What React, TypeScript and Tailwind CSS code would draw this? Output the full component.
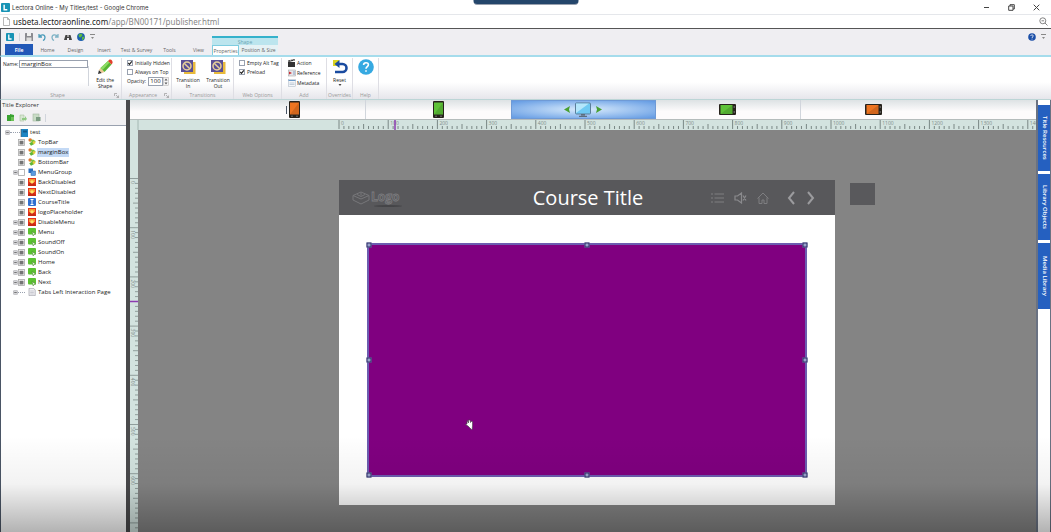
import { type ReactNode } from 'react';

type NodeKind = 'shape' | 'group' | 'image' | 'text' | 'button' | 'page';

interface TreeNode {
  name: string;
  kind: NodeKind;
  expandable?: boolean;
  checkbox?: 'filled' | 'empty';
  selected?: boolean;
}

const nodes: TreeNode[] = [
  { name: 'TopBar', kind: 'shape', checkbox: 'filled' },
  { name: 'marginBox', kind: 'shape', checkbox: 'filled', selected: true },
  { name: 'BottomBar', kind: 'shape', checkbox: 'filled' },
  { name: 'MenuGroup', kind: 'group', checkbox: 'empty', expandable: true },
  { name: 'BackDisabled', kind: 'image', checkbox: 'filled' },
  { name: 'NextDisabled', kind: 'image', checkbox: 'filled' },
  { name: 'CourseTitle', kind: 'text', checkbox: 'filled' },
  { name: 'logoPlaceholder', kind: 'image', checkbox: 'filled' },
  { name: 'DisableMenu', kind: 'image', checkbox: 'filled', expandable: true },
  { name: 'Menu', kind: 'button', checkbox: 'filled', expandable: true },
  { name: 'SoundOff', kind: 'button', checkbox: 'filled', expandable: true },
  { name: 'SoundOn', kind: 'button', checkbox: 'filled', expandable: true },
  { name: 'Home', kind: 'button', checkbox: 'filled', expandable: true },
  { name: 'Back', kind: 'button', checkbox: 'filled', expandable: true },
  { name: 'Next', kind: 'button', checkbox: 'filled', expandable: true },
  { name: 'Tabs Left Interaction Page', kind: 'page', expandable: true },
];

const LogoMark = ({ className }: { className: string }) => (
  <svg viewBox="0 0 10 10" className={className}>
    <rect width="10" height="10" rx="1" fill="#1793b5" />
    <path d="M3.5 2v5.5H7" fill="none" stroke="#fff" strokeWidth="1.6" />
  </svg>
);

const NodeIcon = ({ kind }: { kind: NodeKind }) => (
  <svg viewBox="0 0 8 8" className="size-2 shrink-0">
    {kind === 'shape' && (
      <>
        <circle cx="2.2" cy="2" r="1.8" fill="#e2762a" />
        <path d="M2 2.6 5 1.4l2.8 1.8L5.5 5z" fill="#7cc242" />
        <path d="M1.2 5.2 4.5 3.6 6.4 6 3 7.8z" fill="#62b534" />
        <circle cx="6" cy="4.6" r="1.4" fill="#e9cf3b" />
      </>
    )}
    {kind === 'group' && (
      <>
        <rect x="0.5" y="0.5" width="4.5" height="4.5" fill="#2a6fc4" />
        <rect x="3" y="3" width="4.5" height="4.5" fill="#5b9be0" stroke="#2a5f9e" strokeWidth=".5" />
      </>
    )}
    {kind === 'image' && (
      <>
        <rect width="8" height="8" fill="#e2341d" />
        <rect x="1" y="1" width="6" height="3" fill="#f59a2d" />
        <circle cx="4" cy="4" r="1.8" fill="#ffe76b" />
        <path d="M0 6.5 2.5 5 4 6l1.5-1L8 7v1H0z" fill="#c92a14" />
      </>
    )}
    {kind === 'text' && (
      <>
        <rect width="8" height="8" rx="1" fill="#2f6fd0" />
        <path d="M2.5 1.5h3M4 1.5v5M2.5 6.5h3" stroke="#fff" />
      </>
    )}
    {kind === 'button' && (
      <>
        <rect width="8" height="6.5" rx="1" fill="#5cc132" />
        <path d="M4 3.5 7.8 6 6 6.3 5.2 8z" fill="#e8f5e0" stroke="#3e7d26" strokeWidth=".5" />
      </>
    )}
    {kind === 'page' && (
      <>
        <path d="M1 .3h4.5L7.2 2v5.7H1z" fill="#f1f1f4" stroke="#8e8e98" strokeWidth=".6" />
        <path d="M2.2 3h3.6M2.2 4.5h3.6M2.2 6h3.6" stroke="#a3a3ae" strokeWidth=".5" />
      </>
    )}
  </svg>
);

const Expander = () => (
  <svg viewBox="0 0 6 6" className="size-[5px] shrink-0">
    <rect x=".5" y=".5" width="5" height="5" rx="1" fill="#d5d5d8" stroke="#9a9aa0" strokeWidth=".6" />
    <path d="M1.5 3h3" stroke="#444" strokeWidth=".8" />
  </svg>
);

const TreeRow = ({ node }: { node: TreeNode }) => (
  <li className="flex h-[10px] items-center pl-[11px]">
    <span className="flex w-1.5 justify-center">{node.expandable && <Expander />}</span>
    {node.checkbox ? (
      <svg viewBox="0 0 7 7" className="size-[7px] shrink-0">
        <rect x=".5" y=".5" width="6" height="6" fill="#fff" stroke="#a8a8a8" strokeWidth=".8" />
        {node.checkbox === 'filled' && <rect x="1.5" y="1.7" width="4" height="3.8" fill="#757575" />}
      </svg>
    ) : (
      <span className="w-[7px] border-t border-dotted border-gray-400" />
    )}
    <span className="ml-[3px] flex">
      <NodeIcon kind={node.kind} />
    </span>
    <button
      className={
        node.selected
          ? 'ml-px bg-[#c3d9f5] px-px whitespace-nowrap'
          : 'ml-px px-px whitespace-nowrap'
      }
    >
      {node.name}
    </button>
  </li>
);

const TitleExplorer = () => (
  <aside className="flex w-[126px] shrink-0 flex-col border-l border-gray-600 bg-white">
    <h2 className="h-[10px] bg-[#f4f3f5] pl-px text-[6px] leading-[10px] text-[#333]">Title Explorer</h2>
    <div className="flex h-4 items-center gap-1 border-b border-gray-400 bg-[#f1f0f2] pl-[5px]">
      <button aria-label="Add page">
        <svg viewBox="0 0 9 9" className="size-[9px]">
          <path d="M1 2h3v6H1zM4 1l4 1v6H4z" fill="#3aa332" />
          <path d="M5 4h3v4H5z" fill="#6cc257" />
        </svg>
      </button>
      <button aria-label="Import page">
        <svg viewBox="0 0 9 9" className="size-[9px]">
          <path d="M1 2h4v6H1z" fill="#d7e6d2" stroke="#a7c39f" strokeWidth=".6" />
          <path d="M3 5h3V3l2 3-2 2V7H3z" fill="#8fc982" />
        </svg>
      </button>
      <button aria-label="Save to library">
        <svg viewBox="0 0 9 9" className="size-[9px]">
          <rect x="1" y="1" width="6" height="7" fill="#c9dcc6" stroke="#a2b89f" strokeWidth=".6" />
          <rect x="4" y="4" width="4.5" height="4" fill="#7b9c82" />
        </svg>
      </button>
      <span className="h-2 border-l border-gray-300" />
    </div>
    <div className="grow pt-px text-[6px] leading-[9px] text-[#222]">
      <div className="flex h-[10px] items-center pt-px pl-1">
        <Expander />
        <span className="w-2.5 border-t border-dotted border-gray-400" />
        <svg viewBox="0 0 8 8" className="size-2">
          <rect x="1" width="7" height="8" fill="#1f86c4" />
          <path d="M0 1h2M0 3h2M0 5h2M0 7h2" stroke="#555" strokeWidth=".6" />
          <rect x="3" y="1.5" width="4" height="2" fill="#155d8d" />
        </svg>
        <span className="ml-0.5">test</span>
      </div>
      <ul>
        {nodes.map((node) => (
          <TreeRow key={node.name} node={node} />
        ))}
      </ul>
    </div>
  </aside>
);

const BrowserBar = () => (
  <header className="border-b border-[#555] bg-white font-['Noto_Sans',sans-serif]">
    <div className="flex h-[14px] items-center pl-px">
      <LogoMark className="mr-0.5 size-[9px]" />
      <h1 className="grow font-['Inter','Noto_Sans',sans-serif] text-[6px] text-[#333]">
        Lectora Online - My Titles/test - Google Chrome
      </h1>
      <div className="flex items-center gap-[18px] pr-[11px] text-[#444]">
        <button aria-label="Minimize">
          <svg viewBox="0 0 7 7" className="size-[7px]">
            <path d="M1 3.5h5" stroke="currentColor" />
          </svg>
        </button>
        <button aria-label="Restore">
          <svg viewBox="0 0 7 7" className="size-[7px]">
            <path d="M.7 2h4.3v4.3H.7zM2 2V.7h4.3V5H5" fill="none" stroke="currentColor" />
          </svg>
        </button>
        <button aria-label="Close">
          <svg viewBox="0 0 7 7" className="size-[7px]">
            <path d="m.7.7 5.6 5.6m0-5.6L.7 6.3" stroke="currentColor" />
          </svg>
        </button>
      </div>
    </div>
    <div className="flex h-[14px] items-center border-t border-gray-200 pr-[3px] pl-[3px]">
      <svg viewBox="0 0 7 9" className="mr-[3px] h-[9px] w-[7px]">
        <path d="M.5.5h4l2 2v6h-6z" fill="#fff" stroke="#999" strokeWidth=".7" />
        <path d="M4.5.5v2h2" fill="none" stroke="#999" strokeWidth=".7" />
      </svg>
      <span className="grow pb-px text-[8px] leading-[11px] text-[#888]">
        <span className="text-[#222]">usbeta.lectoraonline.com</span>/app/BN00171/publisher.html
      </span>
      <svg viewBox="0 0 9 9" className="size-[9px]" fill="none" stroke="#666" strokeWidth=".8">
        <circle cx="3.8" cy="3.8" r="3" />
        <path d="m6 6 2.5 2.5M2.500 3.800h2.600" />
      </svg>
    </div>
  </header>
);

const QuickAccess = () => (
  <div className="flex h-[15px] items-center border-l border-gray-600 bg-[#efeef2] pl-[5px]">
    <LogoMark className="size-2" />
    <span className="ml-[5px] h-2 border-l border-gray-300" />
    <div className="ml-[5px] flex grow items-center gap-[5px]">
      <button aria-label="Save">
        <svg viewBox="0 0 8 8" className="size-2">
          <rect width="8" height="8" rx=".5" fill="#8a8a90" />
          <rect x="2" width="4" height="3" fill="#eee" />
          <rect x="1.5" y="4.5" width="5" height="3.5" fill="#ddd" />
        </svg>
      </button>
      <button aria-label="Undo">
        <svg viewBox="0 0 8 8" className="size-2" fill="none" stroke="#4c9cba" strokeWidth="1.3">
          <path d="M1 1v3h3M1.300 4C3 .8 7 1.5 7 4.5 7 6 6 7 5 7.500" />
        </svg>
      </button>
      <button aria-label="Redo">
        <svg viewBox="0 0 8 8" className="size-2" fill="none" stroke="#7fb3c6" strokeWidth="1.3">
          <path d="M7 1v3H4M6.700 4C5 .8 1 1.5 1 4.5 1 6 2 7 3 7.500" />
        </svg>
      </button>
      <button aria-label="Find">
        <svg viewBox="0 0 8 8" className="size-2" fill="#444">
          <path d="M1.5 2h2v2h1V2h2L8 7H5V5H3v2H0z" />
        </svg>
      </button>
      <button aria-label="Preview in browser">
        <svg viewBox="0 0 8 8" className="size-2">
          <circle cx="4" cy="4" r="3.9" fill="#1d5fae" />
          <path d="M1.5 1.5 4.500.5 5.500 2.500 3.500 4.500 2 4zM5 4l2.500-.5L6.500 6.500 5 7z" fill="#5dbb3e" />
        </svg>
      </button>
      <button aria-label="Customize toolbar">
        <svg viewBox="0 0 5 6" className="h-1.5 w-[5px]" fill="#888">
          <path d="M0 0h5v1H0zM1 3h3L2.500 5z" />
        </svg>
      </button>
    </div>
    <button aria-label="Help" className="mr-[5px]">
      <svg viewBox="0 0 8 8" className="size-2">
        <circle cx="4" cy="4" r="3.8" fill="#1c4fa8" />
        <path d="M2.800 3c0-1.600 2.500-1.500 2.400 0C5.200 4 4 3.900 4 5M4 5.700v.8" stroke="#fff" strokeWidth=".8" fill="none" />
      </svg>
    </button>
    <button aria-label="Collapse ribbon" className="mr-[5px]">
      <svg viewBox="0 0 5 6" className="h-1.5 w-[5px]" fill="#888">
        <path d="M0 0h5v1H0zM1 3h3L2.500 5z" />
      </svg>
    </button>
  </div>
);

const tabStyle = 'h-[11px] text-center';

const TabStrip = () => (
  <nav className="flex h-[13px] items-end border-b-2 border-l border-b-[#a5dcec] border-l-gray-600 bg-[#efeef2] text-[5px] leading-[10px] text-[#666]">
    <button className="ml-1 h-[11px] w-7 bg-[#2158b8] font-bold text-white">File</button>
    <button className={`${tabStyle} w-[29px]`}>Home</button>
    <button className={`${tabStyle} w-[27px]`}>Design</button>
    <button className={`${tabStyle} w-[30px]`}>Insert</button>
    <button className={`${tabStyle} w-[35px] whitespace-nowrap`}>Test &amp; Survey</button>
    <button className={`${tabStyle} w-[31px]`}>Tools</button>
    <button className={`${tabStyle} w-[27px]`}>View</button>
    <div className="flex flex-col border-t-2 border-[#35b1cb] bg-[#bce5ee]">
      <span className="h-[7px] text-center leading-[8px] text-[#6aa4b2]">Shape</span>
      <div className="flex">
        <button className="h-[10px] w-[27px] border border-b-0 border-[#7fcde0] bg-white leading-[8px]">
          Properties
        </button>
        <button className="h-[10px] w-[39px] bg-[#e6f2f5] leading-[9px] whitespace-nowrap">
          Position &amp; Size
        </button>
      </div>
    </div>
  </nav>
);

interface RibbonGroupProps {
  title: string;
  className: string;
  launcher?: boolean;
  children: ReactNode;
}

const RibbonGroup = ({ title, className, launcher, children }: RibbonGroupProps) => (
  <section className={`flex shrink-0 flex-col border-r border-[#dedee4] ${className}`}>
    <div className="flex grow">{children}</div>
    <div className="flex h-2 items-center text-[5px] leading-[8px] text-[#999]">
      <h3 className="grow text-center">{title}</h3>
      {launcher && (
        <svg viewBox="0 0 5 5" className="mr-0.5 size-[5px]" fill="none" stroke="#999" strokeWidth=".7">
          <path d="M.5 3V.5H3M2 2l2.500 2.500M4.500 2.500v2h-2" />
        </svg>
      )}
    </div>
  </section>
);

const TransitionIcon = () => (
  <svg viewBox="0 0 16 16" className="size-4">
    <rect x="4" y="3" width="11.5" height="12" fill="#e8ba3c" />
    <rect x="1" y="1" width="12" height="12" fill="#5a4f96" />
    <circle cx="7" cy="7" r="4" fill="none" stroke="#e7cf9a" strokeWidth="1.5" />
    <path d="m4.200 4.200 5.600 5.600" stroke="#e7cf9a" strokeWidth="1.5" />
  </svg>
);

const CheckField = ({ label, checked }: { label: string; checked?: boolean }) => (
  <label className="flex h-[9px] items-center gap-0.5 whitespace-nowrap">
    <input
      type="checkbox"
      defaultChecked={checked}
      className="peer size-1.5 appearance-none border border-gray-400 bg-white"
    />
    <svg
      viewBox="0 0 6 6"
      className="-ml-2 hidden size-1.5 peer-checked:block"
      fill="none"
      stroke="#222"
      strokeWidth="1.2"
    >
      <path d="m1.300 3 1.200 1.400L4.800 1.300" />
    </svg>
    {label}
  </label>
);

const Ribbon = () => (
  <div className="flex h-[43px] border-b border-l border-b-[#bcd5d6] border-l-gray-600 bg-linear-to-b from-white from-60% to-[#e6e6eb] pt-px text-[5px] leading-[6px] text-[#222]">
    <RibbonGroup title="Shape" className="w-[121px]" launcher>
      <label className="flex h-[11px] grow items-center gap-px pl-0.5">
        Name:
        <input
          defaultValue="marginBox"
          className="h-2 w-[69px] border border-gray-400 bg-white pl-px text-[6px] leading-[6px] outline-none"
        />
      </label>
      <span className="mt-2 h-[20px] border-l border-gray-300" />
      <button className="flex w-[32px] flex-col items-center pt-px">
        <svg viewBox="0 0 16 16" className="mb-0.5 size-4">
          <path d="M1 15 2 11 5 14z" fill="#333" />
          <path d="m2 11 1.500-2 4 4L5 14z" fill="#eec992" />
          <path d="M3.500 9 11 2l3.500 3.500-7 7.500z" fill="#57b534" />
          <path d="M3.500 9 11 2l1.500 1.500L5.500 11z" fill="#8edb65" />
          <path d="m11 2 1.500-1.500q1.500-.5 2.500 1t.5 2.500L14.500 5.500z" fill="#e2412e" />
        </svg>
        <span>Edit the</span>
        <span>Shape</span>
      </button>
    </RibbonGroup>
    <RibbonGroup title="Appearance" className="w-[50px]" launcher>
      <div className="flex flex-col pl-[5px]">
        <CheckField label="Initially Hidden" checked />
        <CheckField label="Always on Top" />
        <label className="flex h-[10px] items-center whitespace-nowrap">
          Opacity:
          <input
            defaultValue="100"
            className="ml-0.5 h-[9px] w-[15px] border border-gray-400 bg-white text-center text-[6px] outline-none"
          />
          <svg viewBox="0 0 6 9" className="h-[9px] w-1.5">
            <rect x=".3" y=".3" width="5.4" height="8.4" fill="#f4f4f6" stroke="#aaa" strokeWidth=".5" />
            <path d="m1.500 3.500 1.500-2 1.500 2zM1.500 5.500l1.500 2 1.500-2z" fill="#555" />
          </svg>
        </label>
      </div>
    </RibbonGroup>
    <RibbonGroup title="Transitions" className="w-[62px]">
      <button className="flex w-[32px] flex-col items-center pt-px">
        <TransitionIcon />
        <span className="mt-0.5">Transition</span>
        <span>In</span>
      </button>
      <button className="flex w-[28px] flex-col items-center pt-px">
        <TransitionIcon />
        <span className="mt-0.5">Transition</span>
        <span>Out</span>
      </button>
    </RibbonGroup>
    <RibbonGroup title="Web Options" className="w-[48px]">
      <div className="flex flex-col pl-[5px]">
        <CheckField label="Empty Alt Tag" />
        <CheckField label="Preload" checked />
      </div>
    </RibbonGroup>
    <RibbonGroup title="Add" className="w-[45px]">
      <div className="flex flex-col pl-[6px]">
        <button className="flex h-[10px] items-center gap-px">
          <svg viewBox="0 0 8 8" className="size-2">
            <path d="M0 3h7v5H0zM0 1.500 6.500 0 7 1.500.5 3z" fill="#333" />
            <path d="m2 .8 1.500 1.400M4.500.3 6 1.800" stroke="#ddd" strokeWidth=".7" />
          </svg>
          Action
        </button>
        <button className="flex h-[10px] items-center gap-px">
          <svg viewBox="0 0 8 8" className="size-2">
            <rect x=".5" y="1" width="7" height="6" fill="#e6e6ea" stroke="#999" strokeWidth=".5" />
            <path d="M1 2.500 4 4 1 5.500z" fill="#ca3338" />
            <path d="M5 3h2M5 5h2" stroke="#4774ad" strokeWidth=".6" />
          </svg>
          Reference
        </button>
        <button className="flex h-[10px] items-center gap-px">
          <svg viewBox="0 0 8 8" className="size-2">
            <rect x=".5" y=".5" width="7" height="7" fill="#f5f7fa" stroke="#a3b1c2" strokeWidth=".5" />
            <path d="M.5 1.500h7" stroke="#6c9bc9" />
            <path d="M1.500 4h5M1.500 5.500h5" stroke="#a3b1c2" strokeWidth=".6" />
          </svg>
          Metadata
        </button>
      </div>
    </RibbonGroup>
    <RibbonGroup title="Overrides" className="w-[26px]">
      <button className="flex grow flex-col items-center pt-px">
        <svg viewBox="0 0 16 16" className="size-4">
          <path d="M1 1h6v6H1z" fill="#d9d322" />
          <path d="M6 5h4.500a4 4 0 0 1 0 8H3" fill="none" stroke="#1a4ba0" strokeWidth="2.6" />
          <path d="M7.500 1v8L2.500 5z" fill="#1a4ba0" />
        </svg>
        <span className="mt-0.5">Reset</span>
        <svg viewBox="0 0 4 3" className="mt-px h-[3px] w-1" fill="#444">
          <path d="M.5 0h3L2 2z" />
        </svg>
      </button>
    </RibbonGroup>
    <RibbonGroup title="Help" className="w-[26px]">
      <button aria-label="Help topics" className="flex grow justify-center pt-px">
        <svg viewBox="0 0 16 16" className="size-4">
          <circle cx="8" cy="8" r="7.8" fill="#36a9e1" />
          <path
            d="M5.600 6c0-3 4.800-3 4.800-.2C10.400 7.600 8 7.600 8 9.800M8 11.200v1.600"
            stroke="#fff"
            strokeWidth="1.6"
            fill="none"
          />
        </svg>
      </button>
    </RibbonGroup>
  </div>
);

const Phone = ({ color }: { color: string }) => (
  <svg viewBox="0 0 11 17" className="h-[17px] w-[11px]">
    <rect width="11" height="17" rx="1" fill="#26221c" />
    <rect x="1" y="1.5" width="9" height="12" fill={color} />
    <path d="M10 1.500v12H1z" fill="#000" opacity=".12" />
    <path d="M2 15.200h2M7 15.200h2" stroke="#888" strokeWidth=".8" />
  </svg>
);

const PhoneLandscape = ({ color }: { color: string }) => (
  <svg viewBox="0 0 17 11" className="h-[11px] w-[17px]">
    <rect width="17" height="11" rx="1" fill="#26221c" />
    <rect x="1.5" y="1" width="12" height="9" fill={color} />
    <path d="M13.500 1v9h-12z" fill="#000" opacity=".12" />
    <path d="M15.200 2v2M15.200 7v2" stroke="#888" strokeWidth=".8" />
  </svg>
);

const deviceStyle = 'flex w-[145px] items-center justify-center';

const DeviceBar = () => (
  <div className="flex h-5 justify-center border-b border-[#b5bcbc] bg-linear-to-b from-[#dde2e4] to-[#fdfbfc] to-60%">
    <button aria-label="Phone portrait" className={`${deviceStyle} border-r border-gray-300`}>
      <span className="mr-0.5 h-2 border-l border-gray-600" />
      <Phone color="#ee7420" />
    </button>
    <button aria-label="Tablet portrait" className={deviceStyle}>
      <Phone color="#5ec238" />
    </button>
    <button
      aria-label="Desktop"
      className={`${deviceStyle} gap-[5px] border border-[#6f9ad6] bg-radial from-[#d9ebfb] to-[#6199e2]`}
    >
      <svg viewBox="0 0 6 7" className="h-[7px] w-1.5" fill="#48a032">
        <path d="M6 0 5 3.500 6 7 0 3.500z" />
      </svg>
      <svg viewBox="0 0 16 16" className="size-4">
        <rect x=".5" y="1" width="15" height="11" rx=".8" fill="#6fcaf3" stroke="#5b7f9b" />
        <path d="M1 1.500h13L1 11z" fill="#b4e6fb" />
        <path d="M6 12h4v1.500H6zM4 13.800h8V15H4z" fill="#5d6e7d" />
      </svg>
      <svg viewBox="0 0 6 7" className="h-[7px] w-1.5" fill="#48a032">
        <path d="m0 0 1 3.500L0 7l6-3.500z" />
      </svg>
    </button>
    <button aria-label="Tablet landscape" className={`${deviceStyle} border-r border-gray-300`}>
      <PhoneLandscape color="#5ec238" />
    </button>
    <button aria-label="Phone landscape" className={deviceStyle}>
      <PhoneLandscape color="#ee7420" />
    </button>
  </div>
);

// one ruler step is 10 units of the stage
const STEP = 4.92;

const tickLength = (index: number) => {
  if (index % 10 === 0) return 9;
  return index % 5 === 0 ? 5 : 3;
};

const TopRuler = () => (
  <svg className="h-2.5 w-full bg-[#d3e3df]">
    <path d="M8 0v10" stroke="#a4b8b3" />
    {Array.from({ length: 400 }, (_, i) => (
      <path key={i} d={`M${209 + i * STEP} 9v-${tickLength(i)}`} stroke="#6f7d7a" strokeWidth=".9" />
    ))}
    {Array.from({ length: 15 }, (_, i) => (
      <text key={i} x={211 + i * STEP * 10} y="5" fontSize="5" fill="#7f8d8a">
        {i * 100}
      </text>
    ))}
    <path d="M265 0v10" stroke="#8d3bb0" strokeWidth="1.5" />
  </svg>
);

const SideRuler = () => (
  <svg className="h-full w-2 shrink-0 bg-[#d3e3df]">
    {Array.from({ length: 240 }, (_, i) => (
      <path key={i} d={`M8 ${48.5 + i * STEP}h-${tickLength(i)}`} stroke="#7f8d8a" strokeWidth=".8" />
    ))}
    {Array.from({ length: 7 }, (_, i) => (
      <text
        key={i}
        transform={`translate(1 ${51 + i * STEP * 10}) rotate(90)`}
        fontSize="5"
        fill="#7f8d8a"
      >
        {i * 100}
      </text>
    ))}
    <path d="M0 171.500h8" stroke="#8d3bb0" strokeWidth="1.5" />
  </svg>
);

const handles = [
  'top-0 left-0',
  'top-0 left-1/2',
  'top-0 left-full',
  'top-1/2 left-0',
  'top-1/2 left-full',
  'top-full left-0',
  'top-full left-1/2',
  'top-full left-full',
];

const CourseHeader = () => (
  <div className="flex h-[35px] items-center bg-[#58585b] pr-5 pl-[13px] text-[#7e7e81]">
    <div className="flex w-[127px] items-center gap-px">
      <svg viewBox="0 0 18 14" className="h-[14px] w-[18px]" fill="none" stroke="#77777a">
        <path d="M1 4.500 9 1l8 3.500V9l-8 4-8-4zM1 4.500 9 8l8-3.500M9 1.500v3M5 3.500l4 2 4-2" />
      </svg>
      <svg viewBox="0 0 34 18" className="h-[18px] w-[34px]">
        <ellipse cx="17" cy="17" rx="14" ry="1" fill="#454548" />
        <text x="0" y="12" fontSize="12" fontWeight="700" fill="#58585b" stroke="#7d7d80" strokeWidth=".8">
          Logo
        </text>
      </svg>
    </div>
    <h2 className="grow text-center text-[20px] leading-7 text-white">Course Title</h2>
    <div className="flex w-[118px] items-center justify-end">
      <button aria-label="Menu" className="mr-2.5">
        <svg viewBox="0 0 13 10" className="h-2.5 w-[13px]" stroke="currentColor">
          <path d="M0 1h2M3.500 1H13M0 5h2M3.500 5H13M0 9h2M3.500 9H13" />
        </svg>
      </button>
      <button aria-label="Sound off" className="mr-2.5">
        <svg viewBox="0 0 13 12" className="h-3 w-[13px]" fill="none" stroke="#8a8a8d" strokeWidth="1.2">
          <path d="M1 4h2.500L7.500 1v10L3.500 8H1zM9 3.500l3 5m0-5-3 5" />
        </svg>
      </button>
      <button aria-label="Home" className="mr-[18px]">
        <svg viewBox="0 0 12 12" className="size-3" fill="none" stroke="currentColor">
          <path d="M.5 6.500 6 1l5.500 5.500M2 5.500v6h3V8h2v3.500h3v-6" />
        </svg>
      </button>
      <button aria-label="Back" className="mr-3">
        <svg viewBox="0 0 8 14" className="h-[14px] w-2" fill="none" stroke="#9b9b9e" strokeWidth="2">
          <path d="M7 1 2 7l5 6" />
        </svg>
      </button>
      <button aria-label="Next">
        <svg viewBox="0 0 8 14" className="h-[14px] w-2" fill="none" stroke="#9b9b9e" strokeWidth="2">
          <path d="m1 1 5 6-5 6" />
        </svg>
      </button>
    </div>
  </div>
);

const Stage = () => (
  <main className="relative flex grow items-start overflow-hidden bg-[#848484] pt-[50px] pl-[201px]">
    <div className="w-[496px] shrink-0 bg-white pb-7">
      <CourseHeader />
      <div className="relative mx-7 mt-7 h-[234px] border-2 border-[#6c5cb0] bg-[#800080]">
        {handles.map((place) => (
          <span
            key={place}
            className={`absolute size-[5px] -translate-1/2 border border-[#2c2c66] bg-[#9aa4cc] ${place}`}
          />
        ))}
        <svg viewBox="0 0 10 12" className="absolute top-[174px] left-24 h-3 w-2.5">
          <path
            d="M2 1.500 3.500 4 3.500 1 5 1 5.500 3.500 6.800 2 7.500 3 7.500 7 7 11 5 9 3 7 .5 5.500 2 5z"
            fill="#fff"
            stroke="#444"
            strokeWidth=".6"
          />
        </svg>
      </div>
    </div>
    <div className="mt-[3px] ml-[15px] h-[22px] w-[25px] shrink-0 bg-[#59595c]" />
  </main>
);

const SideTabs = () => (
  <aside className="flex w-[15px] shrink-0 flex-col gap-[3px] border-r border-l-2 border-gray-500 bg-white pt-[5px] text-[6px] font-semibold text-white">
    {['Title Resources', 'Library Objects', 'Media Library'].map((label) => (
      <button key={label} className="flex h-[66px] items-center justify-center bg-[#2560c0]">
        <span className="whitespace-nowrap [writing-mode:vertical-rl]">{label}</span>
      </button>
    ))}
  </aside>
);

export default function App() {
  return (
    <div className="relative flex h-screen flex-col overflow-hidden bg-white font-['Open_Sans','Noto_Sans',sans-serif]">
      <BrowserBar />
      <QuickAccess />
      <TabStrip />
      <Ribbon />
      <div className="flex min-h-0 grow">
        <TitleExplorer />
        <div className="w-1 shrink-0 bg-[#4a4a4c]" />
        <div className="flex min-w-0 grow flex-col">
          <DeviceBar />
          <TopRuler />
          <div className="flex min-h-0 grow">
            <SideRuler />
            <Stage />
          </div>
        </div>
        <SideTabs />
      </div>
      <div className="absolute top-0 left-1/2 h-[5px] w-[105px] -translate-x-1/2 rounded-b-sm border-b border-gray-400 bg-[#24466b]" />
      <div className="pointer-events-none absolute inset-x-0 bottom-0 h-24 bg-linear-to-b from-transparent via-black/5 to-black/30" />
    </div>
  );
}
